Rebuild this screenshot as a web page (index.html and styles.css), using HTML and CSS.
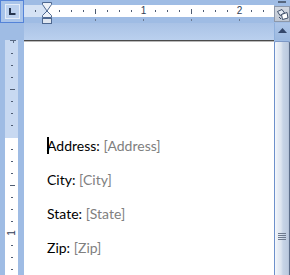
FILE: index.html
```html
<!DOCTYPE html>
<html>
<head>
<meta charset="utf-8">
<link rel="stylesheet" href="styles.css">
</head>
<body>
<div class="app">
  <div class="corner">
    <div class="tabbox">
      <svg width="7" height="7" viewBox="0 0 7 7"><path d="M1 0V6H6.5" fill="none" stroke="#263650" stroke-width="2"/></svg>
    </div>
  </div>
  <div class="hruler">
    <div class="hband">
      <i class="s"></i><i class="o"></i><i class="s"></i><i class="s"></i><i class="s"></i><i class="l"></i>
      <i class="s"></i><i class="s"></i><i class="s"></i><i class="n">1</i><i class="s"></i><i class="s"></i>
      <i class="s"></i><i class="l"></i><i class="s"></i><i class="s"></i><i class="s"></i><i class="n">2</i>
      <i class="s"></i><i class="s"></i>
    </div>
    <div class="tabstops"><i></i><i></i><i></i><i></i></div>
    <svg class="indent" width="10" height="22" viewBox="0 0 10 22">
      <path d="M0.5 0.5H9.5V2.5L5 9L0.5 2.5Z" fill="#edf1f7" stroke="#4e6890"/>
      <path d="M5 9L9.5 13.5V15.5H0.5V13.5Z" fill="#edf1f7" stroke="#4e6890"/>
      <rect x="0.5" y="16.5" width="9" height="5" fill="#dfe6f0" stroke="#4e6890"/>
    </svg>
  </div>
  <div class="rtop">
    <div class="split"></div>
    <div class="rbtn">
      <svg width="13" height="12" viewBox="0 0 13 12">
        <path d="M1.5 3.5L6 1.5L8.5 5L4 7.5Z" fill="#e6ecf4" stroke="#3f4f6a"/>
        <path d="M5.5 6.5L11 4.5L12 10L6.5 11.5Z" fill="#ffffff" stroke="#3f4f6a"/>
        <path d="M3 9L5 11" stroke="#3f4f6a"/>
      </svg>
    </div>
  </div>
  <div class="lgap"></div>
  <div class="ptop"></div>
  <div class="uparrow">
    <svg width="9" height="5" viewBox="0 0 9 5"><path d="M4.5 0L9 5H0Z" fill="#34476a"/></svg>
  </div>
  <div class="vrwrap">
    <div class="vruler">
      <div class="vtop"><svg width="13" height="7" viewBox="0 0 13 7"><path d="M5 0.5H11M8.5 0.5V3" stroke="#5a6a82"/></svg></div>
      <i class="s"></i><i class="s"></i><i class="s"></i><i class="l"></i><i class="s"></i><i class="s"></i>
      <i class="s"></i><i class="o"></i><i class="s"></i><i class="s"></i><i class="s"></i><i class="l"></i>
      <i class="s"></i><i class="s"></i><i class="s"></i><i class="n"><span>1</span></i><i class="s"></i><i class="s"></i>
      <i class="s"></i>
    </div>
  </div>
  <div class="page">
    <p class="line first"><span class="caret"></span>Address: <span class="ph">[Address]</span></p>
    <p class="line">City: <span class="ph">[City]</span></p>
    <p class="line">State: <span class="ph">[State]</span></p>
    <p class="line">Zip: <span class="ph">[Zip]</span></p>
  </div>
  <div class="thumb">
    <div class="grip"><i></i><i></i><i></i><i></i></div>
  </div>
</div>
</body>
</html>
```
FILE: styles.css
```css
html, body {
  margin: 0;
  padding: 0;
  overflow: hidden;
}
body {
  width: 290px;
  height: 275px;
}
.app {
  display: grid;
  grid-template-columns: 24px 250px 16px;
  grid-template-rows: 23px 17px 235px;
  width: 290px;
  height: 275px;
  background: #9fbce4;
  overflow: hidden;
}

/* corner tab selector */
.corner {
  box-sizing: border-box;
  border: 1px solid #5483d8;
  background: #a9c4ea;
  display: flex;
  align-items: center;
  justify-content: center;
}
.tabbox {
  box-sizing: border-box;
  width: 15px;
  height: 15px;
  border: 1px solid #e3ecf9;
  background: #bcd1ef;
  display: flex;
  align-items: center;
  justify-content: center;
}

/* horizontal ruler */
.hruler {
  position: relative;
  padding-top: 5px;
}
.hband {
  height: 12px;
  display: flex;
  padding-left: 5px;
  background: linear-gradient(to right, #d5e2f4 23px, #ffffff 23px);
  font-family: "Liberation Sans", Arial, sans-serif;
}
.hband i {
  flex: none;
  width: 12px;
  height: 12px;
  font-style: normal;
}
.hband .s::before,
.hband .l::before {
  content: "";
  display: block;
  width: 1px;
  margin-left: 6px;
  background: #4e5c72;
}
.hband .s::before {
  height: 2px;
  margin-top: 5px;
}
.hband .l::before {
  height: 5px;
  margin-top: 4px;
}
.hband .n {
  font-size: 10px;
  line-height: 12px;
  text-align: center;
  color: #2f3d57;
  padding-left: 1px;
  box-sizing: border-box;
}
.tabstops {
  display: flex;
  gap: 47px;
  padding-left: 71px;
  margin-top: 2px;
}
.tabstops i {
  width: 1px;
  height: 2px;
  background: #6b7a92;
}
.indent {
  position: absolute;
  left: 18px;
  top: 2px;
}

/* right column top */
.rtop {
  display: flex;
  flex-direction: column;
  align-items: center;
}
.split {
  width: 8px;
  height: 2px;
  margin-top: 1px;
  background: #56677f;
}
.rbtn {
  box-sizing: border-box;
  width: 16px;
  height: 16px;
  margin-top: 3px;
  border: 1px solid #8d98aa;
  background: linear-gradient(#d2d8e1, #bfc7d3);
  display: flex;
  align-items: center;
  justify-content: center;
}

.ptop {
  background: linear-gradient(#a9c2e6, #bad0ee);
}
.uparrow {
  box-sizing: border-box;
  border-left: 1px solid #8fb0dc;
  background: linear-gradient(#acc5e8, #9cb9e0);
  display: flex;
  align-items: center;
  justify-content: center;
  padding-bottom: 3px;
}

/* vertical ruler */
.vrwrap {
  padding-left: 5px;
}
.vruler {
  width: 13px;
  height: 235px;
  display: flex;
  flex-direction: column;
  background: linear-gradient(#c8d9f1 98px, #ffffff 98px);
  font-family: "Liberation Sans", Arial, sans-serif;
}
.vtop {
  height: 7px;
  flex: none;
}
.vtop svg {
  display: block;
}
.vruler i {
  flex: none;
  height: 12px;
  font-style: normal;
}
.vruler .s::before,
.vruler .l::before {
  content: "";
  display: block;
  height: 1px;
  margin-top: 6px;
  background: #4e5c72;
}
.vruler .s::before {
  width: 2px;
  margin-left: 6px;
}
.vruler .l::before {
  width: 5px;
  margin-left: 5px;
}
.vruler .n {
  display: flex;
  align-items: center;
  justify-content: center;
  font-size: 10px;
  line-height: 10px;
  color: #2f3d57;
}
.vruler .n span {
  display: block;
  transform: rotate(-90deg);
}

/* page */
.page {
  background: #ffffff;
  border-top: 1px solid #4a4a4a;
  box-shadow: inset 0 1px 0 #b9b9b9;
  padding: 95px 0 0 23px;
  overflow: hidden;
  font-family: Lato, "Liberation Sans", sans-serif;
  font-size: 14px;
  color: #000000;
}
.line {
  margin: 0 0 14px 0;
  line-height: 20px;
  white-space: nowrap;
}
.first {
  position: relative;
}
.caret {
  position: absolute;
  left: 0;
  top: 1px;
  width: 2px;
  height: 17px;
  background: #000000;
}
.ph {
  color: #808080;
}

/* scroll thumb */
.thumb {
  box-sizing: border-box;
  margin-top: 1px;
  border-left: 1px solid #6d90cb;
  border-right: 1px solid #5c6d89;
  border-top: 1px solid #7d98c6;
  border-radius: 2px 2px 0 0;
  background: linear-gradient(to right, #f4f7fb 0, #e6ecf5 3px, #dde5f0 6px, #c7d4e6 8px, #bccadf 13px, #aebdd3 14px);
  display: flex;
  flex-direction: column;
  align-items: center;
  padding-top: 191px;
}
.grip {
  display: flex;
  flex-direction: column;
  gap: 1px;
}
.grip i {
  width: 8px;
  height: 1px;
  background: #6e7a8e;
}
```
